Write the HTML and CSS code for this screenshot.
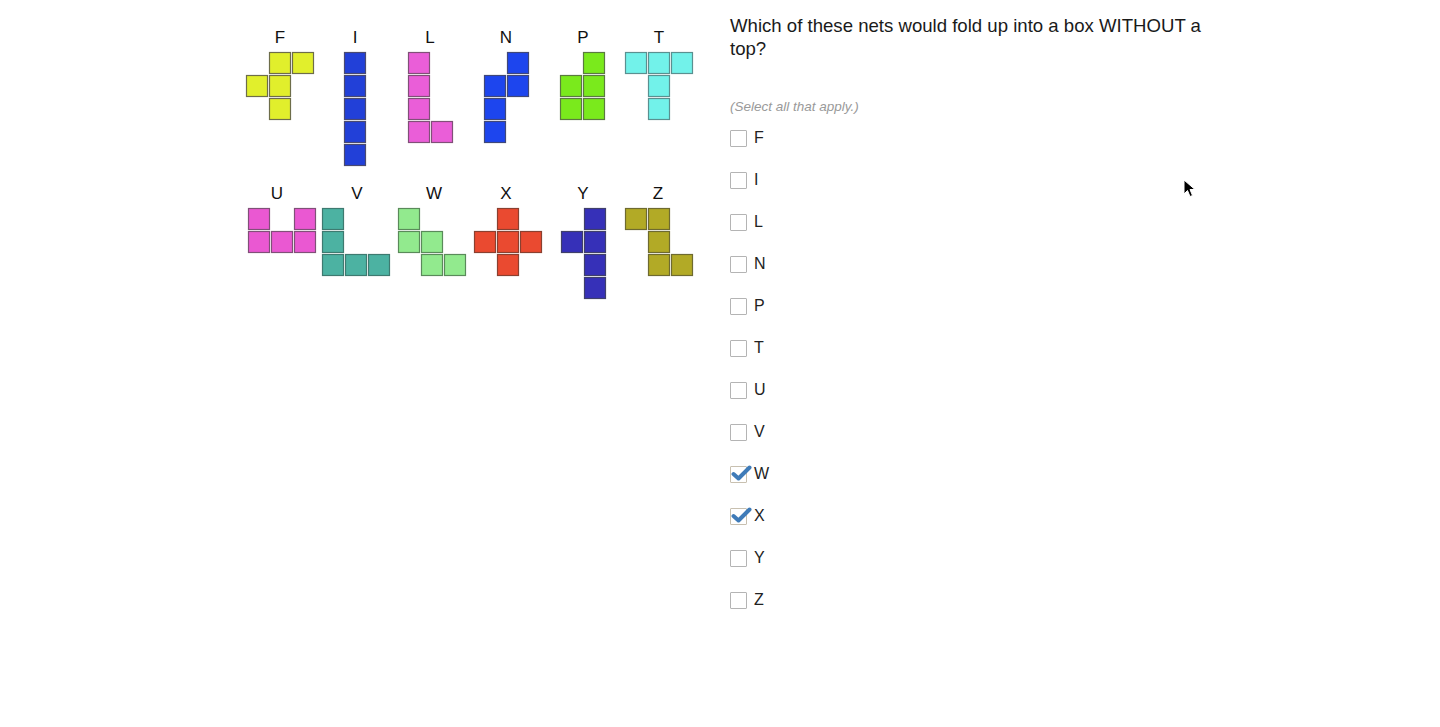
FILE: index.html
```html
<!DOCTYPE html>
<html>
<head>
<meta charset="utf-8">
<link rel="stylesheet" href="styles.css">
</head>
<body>
<div class="page">
  <div class="figure">
    <svg class="nets" width="460" height="290" viewBox="240 20 460 290" xmlns="http://www.w3.org/2000/svg">
      <g class="lbl" font-family="Liberation Sans, Arial, sans-serif" font-size="17" text-anchor="middle" fill="#111">
        <text x="280" y="43">F</text>
        <text x="355" y="43">I</text>
        <text x="430" y="43">L</text>
        <text x="506" y="43">N</text>
        <text x="583" y="43">P</text>
        <text x="659" y="43">T</text>
        <text x="277" y="199">U</text>
        <text x="357" y="199">V</text>
        <text x="434" y="199">W</text>
        <text x="506" y="199">X</text>
        <text x="583" y="199">Y</text>
        <text x="658" y="199">Z</text>
      </g>
      <g stroke="#6d6d4a" stroke-width="1.2">
        <g fill="#e1ef2c">
          <rect x="269.5" y="52.5" width="21" height="21"/>
          <rect x="292.5" y="52.5" width="21" height="21"/>
          <rect x="246.5" y="75.5" width="21" height="21"/>
          <rect x="269.5" y="75.5" width="21" height="21"/>
          <rect x="269.5" y="98.5" width="21" height="21"/>
        </g>
        <g fill="#2240d8" stroke="#4a4a70">
          <rect x="344.5" y="52.5" width="21" height="21"/>
          <rect x="344.5" y="75.5" width="21" height="21"/>
          <rect x="344.5" y="98.5" width="21" height="21"/>
          <rect x="344.5" y="121.5" width="21" height="21"/>
          <rect x="344.5" y="144.5" width="21" height="21"/>
        </g>
        <g fill="#ea5ed8" stroke="#805078">
          <rect x="408.5" y="52.5" width="21" height="21"/>
          <rect x="408.5" y="75.5" width="21" height="21"/>
          <rect x="408.5" y="98.5" width="21" height="21"/>
          <rect x="408.5" y="121.5" width="21" height="21"/>
          <rect x="431.5" y="121.5" width="21" height="21"/>
        </g>
        <g fill="#1d45ee" stroke="#404878">
          <rect x="507.5" y="52.5" width="21" height="21"/>
          <rect x="484.5" y="75.5" width="21" height="21"/>
          <rect x="507.5" y="75.5" width="21" height="21"/>
          <rect x="484.5" y="98.5" width="21" height="21"/>
          <rect x="484.5" y="121.5" width="21" height="21"/>
        </g>
        <g fill="#7aea1c" stroke="#5a7a40">
          <rect x="583.5" y="52.5" width="21" height="21"/>
          <rect x="560.5" y="75.5" width="21" height="21"/>
          <rect x="583.5" y="75.5" width="21" height="21"/>
          <rect x="560.5" y="98.5" width="21" height="21"/>
          <rect x="583.5" y="98.5" width="21" height="21"/>
        </g>
        <g fill="#72f2ea" stroke="#5a9090">
          <rect x="625.5" y="52.5" width="21" height="21"/>
          <rect x="648.5" y="52.5" width="21" height="21"/>
          <rect x="671.5" y="52.5" width="21" height="21"/>
          <rect x="648.5" y="75.5" width="21" height="21"/>
          <rect x="648.5" y="98.5" width="21" height="21"/>
        </g>
        <g fill="#ea58d2" stroke="#805078">
          <rect x="248.5" y="208.5" width="21" height="21"/>
          <rect x="294.5" y="208.5" width="21" height="21"/>
          <rect x="248.5" y="231.5" width="21" height="21"/>
          <rect x="271.5" y="231.5" width="21" height="21"/>
          <rect x="294.5" y="231.5" width="21" height="21"/>
        </g>
        <g fill="#4cb2a2" stroke="#3e7a70">
          <rect x="322.5" y="208.5" width="21" height="21"/>
          <rect x="322.5" y="231.5" width="21" height="21"/>
          <rect x="322.5" y="254.5" width="21" height="21"/>
          <rect x="345.5" y="254.5" width="21" height="21"/>
          <rect x="368.5" y="254.5" width="21" height="21"/>
        </g>
        <g fill="#92ea8e" stroke="#5a8a5a">
          <rect x="398.5" y="208.5" width="21" height="21"/>
          <rect x="398.5" y="231.5" width="21" height="21"/>
          <rect x="421.5" y="231.5" width="21" height="21"/>
          <rect x="421.5" y="254.5" width="21" height="21"/>
          <rect x="444.5" y="254.5" width="21" height="21"/>
        </g>
        <g fill="#ea4a30" stroke="#8a4030">
          <rect x="497.5" y="208.5" width="21" height="21"/>
          <rect x="474.5" y="231.5" width="21" height="21"/>
          <rect x="497.5" y="231.5" width="21" height="21"/>
          <rect x="520.5" y="231.5" width="21" height="21"/>
          <rect x="497.5" y="254.5" width="21" height="21"/>
        </g>
        <g fill="#3630b8" stroke="#40406a">
          <rect x="584.5" y="208.5" width="21" height="21"/>
          <rect x="561.5" y="231.5" width="21" height="21"/>
          <rect x="584.5" y="231.5" width="21" height="21"/>
          <rect x="584.5" y="254.5" width="21" height="21"/>
          <rect x="584.5" y="277.5" width="21" height="21"/>
        </g>
        <g fill="#b2aa26" stroke="#6e6a30">
          <rect x="625.5" y="208.5" width="21" height="21"/>
          <rect x="648.5" y="208.5" width="21" height="21"/>
          <rect x="648.5" y="231.5" width="21" height="21"/>
          <rect x="648.5" y="254.5" width="21" height="21"/>
          <rect x="671.5" y="254.5" width="21" height="21"/>
        </g>
      </g>
    </svg>
  </div>
  <div class="question">
    <p class="prompt">Which of these nets would fold up into a box WITHOUT a top?</p>
    <p class="hint">(Select all that apply.)</p>
    <ul class="choices">
      <li class="choice"><span class="box"></span><span class="label">F</span></li>
      <li class="choice"><span class="box"></span><span class="label">I</span></li>
      <li class="choice"><span class="box"></span><span class="label">L</span></li>
      <li class="choice"><span class="box"></span><span class="label">N</span></li>
      <li class="choice"><span class="box"></span><span class="label">P</span></li>
      <li class="choice"><span class="box"></span><span class="label">T</span></li>
      <li class="choice"><span class="box"></span><span class="label">U</span></li>
      <li class="choice"><span class="box"></span><span class="label">V</span></li>
      <li class="choice"><span class="box checked"><svg class="tick" width="22" height="18" viewBox="0 0 22 18"><path d="M2.5 9 L7.5 13.5 L18.5 2.5" fill="none" stroke="#3f7bb8" stroke-width="4" stroke-linecap="round" stroke-linejoin="round"/></svg></span><span class="label">W</span></li>
      <li class="choice"><span class="box checked"><svg class="tick" width="22" height="18" viewBox="0 0 22 18"><path d="M2.5 9 L7.5 13.5 L18.5 2.5" fill="none" stroke="#3f7bb8" stroke-width="4" stroke-linecap="round" stroke-linejoin="round"/></svg></span><span class="label">X</span></li>
      <li class="choice"><span class="box"></span><span class="label">Y</span></li>
      <li class="choice"><span class="box"></span><span class="label">Z</span></li>
    </ul>
  </div>
</div>
<svg class="cursor" width="14" height="20" viewBox="0 0 14 20"><path d="M1 1 L1 15 L4.5 11.5 L7 17.5 L9.5 16.5 L7 10.5 L12 10.5 Z" fill="#000" stroke="#fff" stroke-width="1"/></svg>
</body>
</html>
```

FILE: styles.css
```css
html, body {
  margin: 0;
  padding: 0;
  background: #fff;
}
body {
  font-family: "Liberation Sans", Arial, Helvetica, sans-serif;
  color: #222;
  position: relative;
  min-height: 727px;
}
.page {
  width: 960px;
  margin: 0 auto;
  display: grid;
  grid-template-columns: 460px 480px;
  column-gap: 30px;
}
.figure {
  padding-top: 20px;
}
.nets {
  display: block;
}
.question {
  padding-top: 14px;
}
.prompt {
  margin: 0;
  font-size: 18.6px;
  line-height: 23px;
  color: #1a1a1a;
}
.hint {
  margin: 38px 0 0;
  font-size: 13.5px;
  line-height: 18px;
  font-style: italic;
  color: #9a9a9a;
}
.choices {
  list-style: none;
  margin: 12px 0 0;
  padding: 0;
  display: flex;
  flex-direction: column;
  gap: 22px;
}
.choice {
  display: flex;
  align-items: center;
  height: 20px;
  gap: 7px;
}
.box {
  position: relative;
  width: 15px;
  height: 15px;
  border: 1px solid #b4b4b4;
  border-radius: 1px;
  background: #fff;
  flex: none;
}
.box.checked {
  border-color: #c8c0b0;
}
.tick {
  position: absolute;
  left: 0;
  top: -2px;
}
.label {
  font-size: 16px;
  line-height: 20px;
  color: #222;
}
.cursor {
  position: absolute;
  left: 1183px;
  top: 179px;
}
```
